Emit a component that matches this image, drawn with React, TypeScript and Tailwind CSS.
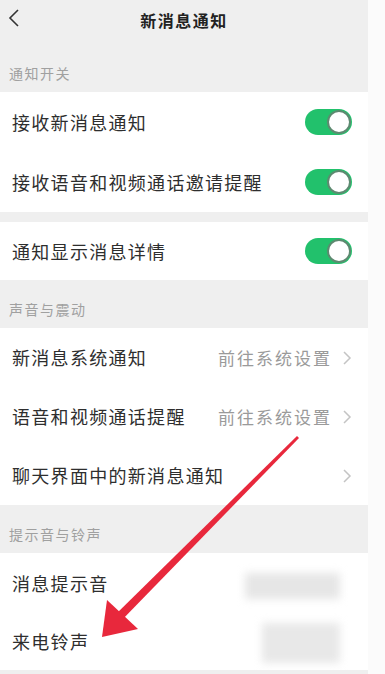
import React from "react";

const font = { fontFamily: '"Noto Sans CJK SC", "Noto Sans", sans-serif' };

function Toggle() {
  return (
    <div className="relative w-[47px] h-[26px] rounded-full bg-[#22c16c]">
      <div className="absolute right-[1px] top-[1px] w-[24px] h-[24px] rounded-full bg-white border-2 border-[#5d8a70]" />
    </div>
  );
}

function Chevron() {
  return (
    <svg width="10" height="16" viewBox="0 0 10 16" className="ml-[10px]">
      <path d="M2 2 L8 8 L2 14" fill="none" stroke="#c4c4c4" strokeWidth="1.5" />
    </svg>
  );
}

function Row({ label, right, h = "h-[59px]" }: { label: string; right?: React.ReactNode; h?: string }) {
  return (
    <div className={`flex items-center justify-between ${h} pl-[12px] pr-[16px]`}>
      <span className="text-[18px] tracking-[1.3px] text-[#2e2e2e]">{label}</span>
      {right}
    </div>
  );
}

function SectionLabel({ text, h }: { text: string; h: string }) {
  return (
    <div className={`${h} flex items-end pl-[9px] pb-[8px]`}>
      <span className="text-[14px] tracking-[1.5px] text-[#a0a0a0]">{text}</span>
    </div>
  );
}

export default function App() {
  return (
    <div className="relative flex w-[385px] h-[674px] overflow-hidden bg-white" style={font}>
      <div className="w-[368px] bg-[#efefef] flex flex-col">
        <div className="h-[40px] relative flex items-center justify-center">
          <svg width="14" height="20" viewBox="0 0 14 20" className="absolute left-[7px] top-[8px]">
            <path d="M11 2 L3 10 L11 18" fill="none" stroke="#333" strokeWidth="1.6" />
          </svg>
          <span className="text-[16px] font-bold tracking-[1.5px] text-[#222]">新消息通知</span>
        </div>
        <SectionLabel text="通知开关" h="h-[52px]" />
        <div className="bg-white">
          <Row label="接收新消息通知" h="h-[60px]" right={<Toggle />} />
          <Row label="接收语音和视频通话邀请提醒" h="h-[60px]" right={<Toggle />} />
        </div>
        <div className="h-[10px]" />
        <div className="bg-white">
          <Row label="通知显示消息详情" h="h-[58px]" right={<Toggle />} />
        </div>
        <SectionLabel text="声音与震动" h="h-[48px]" />
        <div className="bg-white">
          <Row
            label="新消息系统通知"
            right={
              <div className="flex items-center">
                <span className="text-[17px] tracking-[2px] text-[#9a9a9a]">前往系统设置</span>
                <Chevron />
              </div>
            }
          />
          <Row
            label="语音和视频通话提醒"
            right={
              <div className="flex items-center">
                <span className="text-[17px] tracking-[2px] text-[#9a9a9a]">前往系统设置</span>
                <Chevron />
              </div>
            }
          />
          <Row label="聊天界面中的新消息通知" right={<Chevron />} />
        </div>
        <SectionLabel text="提示音与铃声" h="h-[48px]" />
        <div className="bg-white flex-1 relative">
          <Row label="消息提示音" h="h-[61px]" />
          <Row label="来电铃声" h="h-[55px]" />
          <div className="absolute left-[245px] top-[20px] w-[95px] h-[26px] bg-[#e6e6e6] blur-[4px]" />
          <div className="absolute left-[262px] top-[70px] w-[78px] h-[40px] bg-[#e8e8e8] blur-[4px]" />
          <div className="absolute left-0 right-0 bottom-0 h-[4px] bg-[#efefef]" />
        </div>
      </div>
      <div className="flex-1 bg-[#fbfbfb]" />
      <svg className="absolute inset-0 pointer-events-none" width="385" height="674" viewBox="0 0 385 674">
        <polygon points="297,436 299,438 119,623 113,617" fill="#e8283c" />
        <polygon points="102,637 107,600 138,629" fill="#e8283c" />
      </svg>
    </div>
  );
}
